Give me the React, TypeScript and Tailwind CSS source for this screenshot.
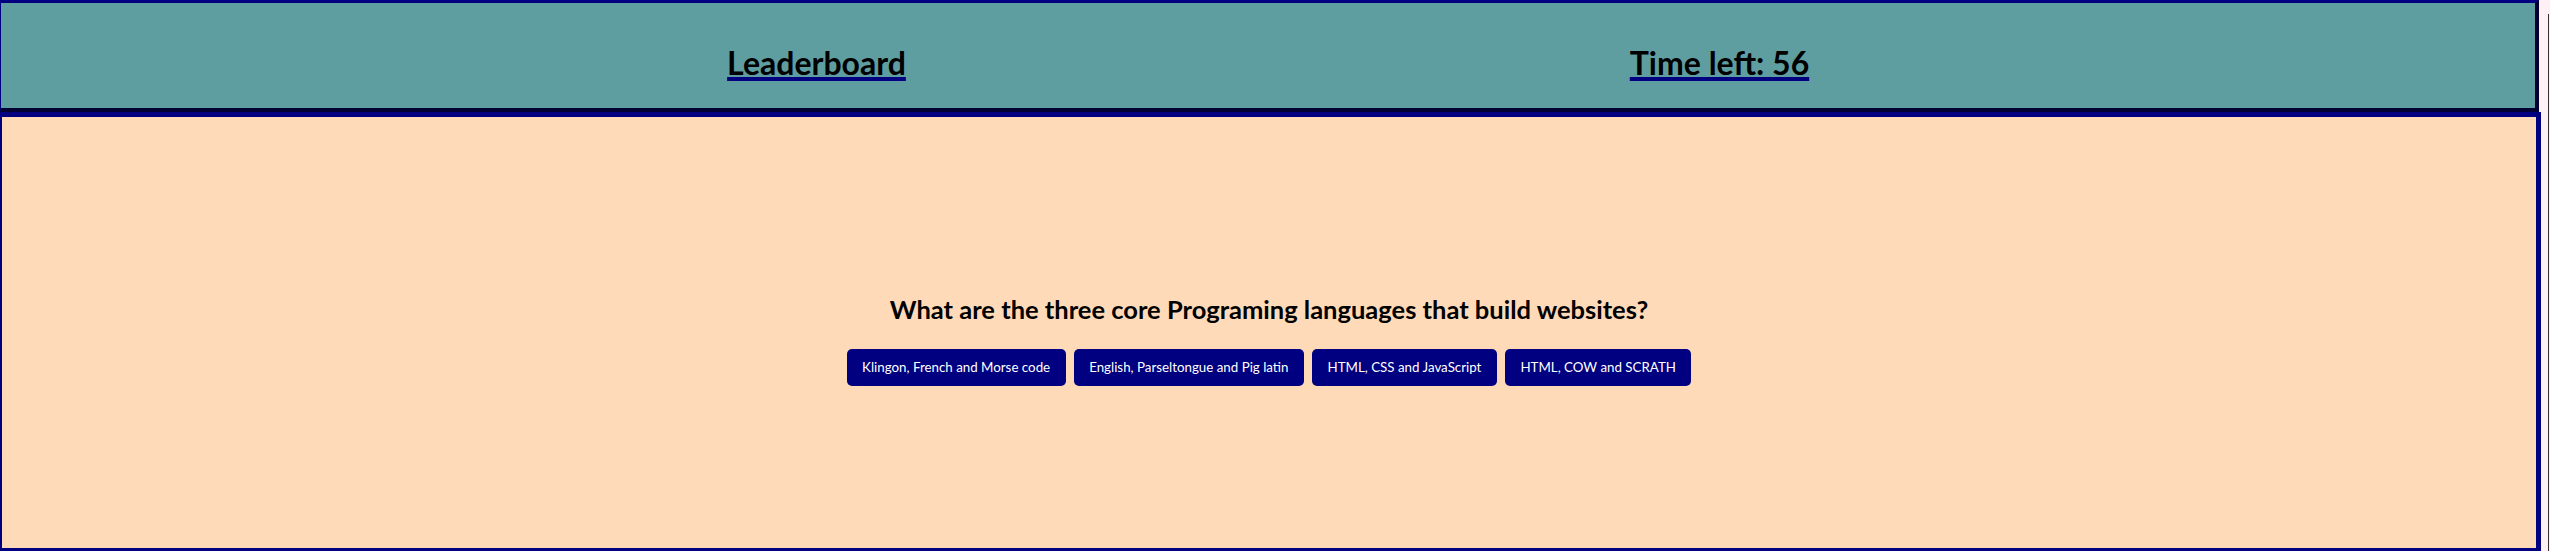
import React from 'react'

const answers = [
  'Klingon, French and Morse code',
  'English, Parseltongue and Pig latin',
  'HTML, CSS and JavaScript',
  'HTML, COW and SCRATH',
]

export default function App() {
  return (
    <div className="flex min-h-[551px] bg-[#fff0f5] font-['Lato','Open_Sans',sans-serif] text-black">
      <div className="flex w-[2541px] flex-col">
        {/* Header */}
        <header className="flex h-[112px] w-[2539px] items-start justify-center gap-[503px] border-t-[3px] border-r-4 border-b-4 border-l border-t-[#000080] border-r-[#000033] border-b-[#000033] border-l-[#000080] bg-[#5f9ea0] pt-[41px]">
          <div className="w-[400px] text-center">
            <a className="text-[32px] font-bold leading-[38px] underline decoration-[#000080] decoration-4 underline-offset-2">
              Leaderboard
            </a>
          </div>
          <div className="w-[400px] text-center">
            <span className="text-[32px] font-bold leading-[38px] underline decoration-[#000080] decoration-4 underline-offset-2">
              Time left: <span>56</span>
            </span>
          </div>
        </header>

        {/* Quiz */}
        <main className="flex h-[439px] flex-col items-center border-t-[5px] border-r-[5px] border-b-[3px] border-l-2 border-[#000080] bg-[#ffdab9] pt-[177px]">
          <h2 className="text-[25.5px] font-bold leading-[31px]">
            What are the three core Programing languages that build websites?
          </h2>
          <div className="mt-[24px] flex gap-2">
            {answers.map((a) => (
              <button
                key={a}
                className="h-[37px] rounded-[5px] bg-[#000080] px-[15.5px] text-[13.33px] text-white"
              >
                {a}
              </button>
            ))}
          </div>
        </main>
      </div>
      <div className="mt-[14px] ml-[7px] w-px bg-[#333333]" />
    </div>
  )
}
